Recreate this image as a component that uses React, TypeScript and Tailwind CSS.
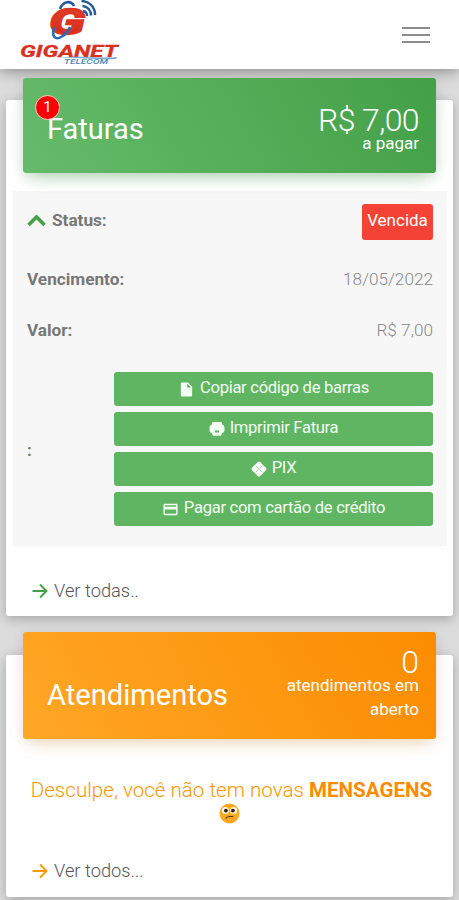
import React from 'react';
import { MdInsertDriveFile, MdOutlineCreditCard } from 'react-icons/md';

function Logo() {
  return (
    <svg width="102" height="66" viewBox="0 0 102 66" className="block">
      <defs>
        <linearGradient id="logoRed" x1="0" y1="0" x2="0" y2="1">
          <stop offset="0" stopColor="#ea4630" />
          <stop offset="1" stopColor="#cf2317" />
        </linearGradient>
      </defs>
      <path d="M40 9 C43 1 51 0 54 6" fill="none" stroke="#24599f" strokeWidth="2.6" />
      <text x="29.500" y="33.700" fontSize="35" fontWeight="700" fontStyle="italic" fill="url(#logoRed)" stroke="#dc3523" strokeWidth="2.4" strokeLinejoin="miter" textLength="35" lengthAdjust="spacingAndGlyphs" className="font-['Roboto',sans-serif]">G</text>
      <path d="M34.500 27 C31 36 35 41 42 36.500 C46 34 49 30 50 27" fill="none" stroke="#286bb4" strokeWidth="2.6" />
      <g fill="none" stroke="#245c9c" strokeWidth="2.4">
        <path d="M63 11 A5 5 0 0 1 67 16" />
        <path d="M62.500 6 A9 9 0 0 1 71 15.500" />
        <path d="M61.500 1 A13.500 13.500 0 0 1 75 15" />
      </g>
      <text x="0" y="57" fontSize="16.500" fontWeight="700" fontStyle="italic" fill="#d9301f" stroke="#d9301f" strokeWidth=".3" textLength="98" lengthAdjust="spacingAndGlyphs" className="font-['Roboto',sans-serif]">GIGANET</text>
      <path d="M40 58 C58 55 78 59 97 57 L96 59 C78 60.500 58 57 40 58Z" fill="#7fa9cf" />
      <text x="44" y="64" fontSize="6.500" fontWeight="500" fontStyle="italic" fill="#4c86b8" textLength="44" lengthAdjust="spacingAndGlyphs" className="font-['Roboto',sans-serif]">TELECOM</text>
    </svg>
  );
}

function PrintIcon() {
  return (
    <svg width="16" height="16" viewBox="0 0 16 16" fill="currentColor" className="shrink-0">
      <path fillRule="evenodd" d="M4 1H12Q13 1 13 2V3.500Q15.500 4 15.500 7V9.500Q15.500 11.500 13.200 12L12 14.700H4L2.800 12Q.5 11.500 .5 9.500V7Q.5 4 3 3.500V2Q3 1 4 1ZM6 9.500V11.500H10V9.500Z" />
    </svg>
  );
}

function PixIcon() {
  return (
    <svg width="16" height="16" viewBox="0 0 16 16" className="shrink-0">
      <path d="M6.800 1Q8 0 9.200 1L11 3L13 5L15 6.800Q16 8 15 9.200L9.200 15Q8 16 6.800 15L1 9.200Q0 8 1 6.800Z" fill="#fff" />
      <path d="M4.500 4.500L7 7Q8 8 9 7L11.500 4.500M4.500 11.500L7 9Q8 8 9 9L11.500 11.500" fill="none" stroke="#60b562" strokeWidth=".5" />
    </svg>
  );
}

function WorriedFace() {
  return (
    <svg width="21" height="21" viewBox="0 0 21 21">
      <circle cx="10.500" cy="10.500" r="10" fill="#fca91f" />
      <circle cx="6.400" cy="7.600" r="3.500" fill="#fff3d8" />
      <circle cx="14.600" cy="7.600" r="3.500" fill="#fff3d8" />
      <circle cx="6.900" cy="7.600" r="1.900" fill="#2b2118" />
      <circle cx="13.900" cy="7.600" r="1.900" fill="#2b2118" />
      <path d="M7 15.200C8 13.500 9.500 14 10.500 13.600S12.500 13.800 14 13.200" fill="none" stroke="#5b3a12" strokeWidth="1.100" strokeLinecap="round" />
    </svg>
  );
}

function Arrow() {
  return (
    <svg width="16" height="16" viewBox="0 0 16 16" fill="none" stroke="currentColor" strokeWidth="1.9" className="shrink-0">
      <path d="M.5 8H14M8 1.500L14.500 8L8 14.500" />
    </svg>
  );
}

const actions = [
  { label: 'Copiar código de barras', icon: <MdInsertDriveFile size={17} /> },
  { label: 'Imprimir Fatura', icon: <PrintIcon /> },
  { label: 'PIX', icon: <PixIcon /> },
  { label: 'Pagar com cartão de crédito', icon: <MdOutlineCreditCard size={17} /> },
];

export default function App() {
  return (
    <div className="h-[900px] w-[459px] overflow-hidden bg-[#dcdcdc] font-['Roboto',sans-serif] text-[#777]">
      <header className="relative flex h-[69px] items-start justify-between bg-white pl-5 pr-[29px] shadow-[0_2px_14px_rgba(0,0,0,0.4)]">
        <Logo />
        <button className="mt-[27px] flex w-7 flex-col gap-[5px]" aria-label="Menu">
          <span className="h-0.5 bg-[#8c8c8c]"></span>
          <span className="h-0.5 bg-[#8c8c8c]"></span>
          <span className="h-0.5 bg-[#8c8c8c]"></span>
        </button>
      </header>

      <section className="mx-1.5 mt-[31px] h-[516px] rounded-[3px] bg-white pl-[7px] pr-1.5 shadow-[0_3px_12px_rgba(0,0,0,0.25)]">
        <div className="relative -top-[22px] mx-2.5 flex h-[95px] w-[413px] justify-between rounded-[3px] bg-linear-[60deg] from-[#66bb6a] to-[#43a047] pl-6 pr-[17px] text-white shadow-[0_10px_18px_-8px_rgba(76,175,80,0.4),0_3px_14px_rgba(0,0,0,0.12)]">
          <h2 className="mt-[33px] text-[29px] leading-9">Faturas</h2>
          <span className="absolute left-3 top-[17px] flex size-[25px] items-center justify-center rounded-full border border-[#ffd0c0] bg-[#fb0007] text-[15px]">1</span>
          <div className="pt-6 text-right">
            <p className="text-[32px] font-light leading-9 tracking-[-0.6px]">R$ 7,00</p>
            <p className="-mt-[7px] text-[17px] leading-6">a pagar</p>
          </div>
        </div>

        <div className="-mt-1 h-[355px] bg-[#f7f7f7] px-3.5 pt-[13px] text-[17px]">
          <div className="flex h-9 items-center justify-between">
            <div className="flex items-center gap-1.5 font-bold">
              <svg width="19" height="13" viewBox="0 0 19 13" fill="none" stroke="#43a047" strokeWidth="3.6" className="-mt-[3px]">
                <path d="M1.500 11L9.500 3L17.500 11" />
              </svg>
              <span className="-mt-0.5 text-[17.2px]">Status:</span>
            </div>
            <span className="flex h-9 w-[71px] justify-center rounded-[3px] bg-[#f44336] pt-1 text-white">Vencida</span>
          </div>
          <div className="mt-7 flex h-6 items-center justify-between">
            <span className="text-[17.2px] font-bold">Vencimento:</span>
            <span className="text-[17.2px] font-light text-[#888]">18/05/2022</span>
          </div>
          <div className="mt-[27px] flex h-6 items-center justify-between">
            <span className="text-[17.2px] font-bold">Valor:</span>
            <span className="text-[17.2px] font-light text-[#888]">R$ 7,00</span>
          </div>
          <div className="mt-[29px] flex items-center justify-between">
            <span className="mt-1 font-bold">:</span>
            <div className="flex w-[319px] flex-col gap-1.5">
              {actions.map((a) => (
                <button key={a.label} className="flex h-[34px] items-center justify-center gap-[5px] rounded-[3px] bg-[#60b562] text-[16.6px] text-[#f3fdf3]">
                  {a.icon}
                  <span className="-mt-px tracking-[-0.3px]">{a.label}</span>
                </button>
              ))}
            </div>
          </div>
        </div>

        <a className="ml-[19px] mt-[31px] flex items-center gap-1.5 text-[18.3px] leading-7 font-light text-[#555]">
          <span className="text-[#43a047]"><Arrow /></span>
          <span>Ver todas..</span>
        </a>
      </section>

      <section className="mx-1.5 mt-[39px] h-[242px] rounded-[3px] bg-white px-[7px] shadow-[0_3px_12px_rgba(0,0,0,0.25)]">
        <div className="relative -top-[23px] mx-2.5 flex h-[107px] w-[413px] justify-between rounded-[3px] bg-linear-[60deg] from-[#ffa726] to-[#fb8c00] pl-6 pr-[17px] text-white shadow-[0_10px_18px_-8px_rgba(255,152,0,0.25),0_3px_14px_rgba(0,0,0,0.1)]">
          <h2 className="mt-[45px] text-[29.1px] leading-9">Atendimentos</h2>
          <div className="w-[150px] pt-3 text-right">
            <p className="text-[32px] font-light leading-9">0</p>
            <p className="-mt-[7px] text-[17px] leading-6">atendimentos em aberto</p>
          </div>
        </div>

        <div className="mt-4 ml-1 text-center text-[20.6px] font-light leading-6 text-[#ff9800]">
          <p className="whitespace-nowrap">Desculpe, você não tem novas <b className="font-bold text-[#fb8c00]">MENSAGENS</b></p>
          <div className="-ml-1 mt-px flex justify-center"><WorriedFace /></div>
        </div>

        <a className="ml-[19px] mt-[33px] flex items-center gap-1.5 text-[18.3px] leading-7 font-light text-[#555]">
          <span className="text-[#ff9800]"><Arrow /></span>
          <span>Ver todos...</span>
        </a>
      </section>
    </div>
  );
}
